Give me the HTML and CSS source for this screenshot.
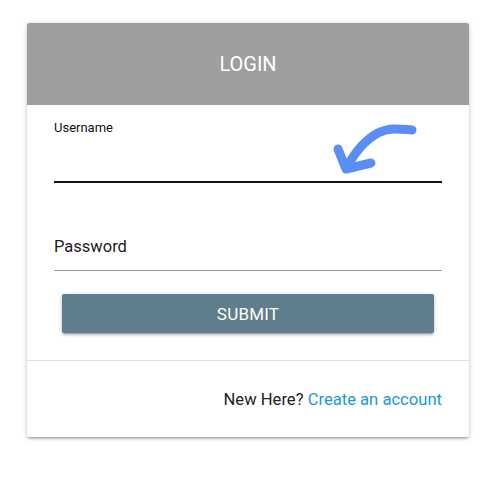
FILE: index.html
```html
<!DOCTYPE html>
<html>
<head>
<meta charset="utf-8">
<link rel="stylesheet" href="styles.css">
</head>
<body>
<div class="card">
  <div class="card-header">LOGIN</div>
  <form class="card-body">
    <div class="field field-user">
      <label class="label-small" for="u">Username</label>
      <input id="u" class="input input-active" type="text">
    </div>
    <div class="field field-pass">
      <input id="p" class="input input-plain" type="password" placeholder="Password">
    </div>
    <button class="submit" type="button">SUBMIT</button>
  </form>
  <div class="card-footer">
    <span class="new">New Here?</span>&nbsp;<a class="link" href="#">Create an account</a>
  </div>
</div>
<svg class="scribble" width="500" height="482" viewBox="0 0 500 482">
  <path d="M412 130 C400 129 390 127 378 133 C365 140 355 152 347 167" />
  <path d="M338 149 L346 169 L371 163" />
</svg>
</body>
</html>
```
FILE: styles.css
```css
html, body {
  margin: 0;
  padding: 0;
  background: #fff;
  font-family: Roboto, "Liberation Sans", sans-serif;
}
body {
  position: relative;
  width: 500px;
  height: 482px;
  padding-top: 23px;
  box-sizing: border-box;
}
.card {
  margin-left: 27px;
  width: 442px;
  background: #fff;
  border-radius: 2px;
  box-shadow: 0 2px 2px 0 rgba(0,0,0,0.14), 0 3px 1px -2px rgba(0,0,0,0.12), 0 1px 5px 0 rgba(0,0,0,0.2);
}
.card-header {
  height: 82px;
  background: #9e9e9e;
  color: #fff;
  font-size: 20px;
  display: flex;
  align-items: center;
  justify-content: center;
  border-radius: 2px 2px 0 0;
}
.card-body {
  margin: 0;
  padding: 0 27px 27px;
  display: flex;
  flex-direction: column;
  border-bottom: 1px solid #e0e0e0;
}
.field {
  display: flex;
  flex-direction: column;
}
.label-small {
  margin-top: 16px;
  font-size: 13px;
  line-height: 14px;
  color: #111;
}
.input {
  font-family: inherit;
  border: none;
  outline: none;
  background: transparent;
  padding: 0;
  margin: 0;
  width: 100%;
  box-sizing: border-box;
}
.input-active {
  height: 48px;
  border-bottom: 2px solid #111;
}
.input-plain {
  margin-top: 40px;
  height: 48px;
  font-size: 16.5px;
  border-bottom: 1px solid #9e9e9e;
}
.input-plain::placeholder {
  color: #1a1a1a;
  opacity: 1;
}
.submit {
  margin: 23px 8px 0;
  height: 39px;
  border: none;
  border-radius: 2px;
  background: #607d8b;
  color: #fff;
  font-family: inherit;
  font-size: 17px;
  letter-spacing: 0.2px;
  box-shadow: 0 2px 2px 0 rgba(0,0,0,0.14), 0 3px 1px -2px rgba(0,0,0,0.12), 0 1px 5px 0 rgba(0,0,0,0.2);
}
.card-footer {
  height: 76px;
  padding: 0 27px;
  display: flex;
  align-items: center;
  justify-content: flex-end;
  font-size: 16.6px;
  color: #222;
}
.link {
  color: #1a98dc;
  text-decoration: none;
}
.scribble {
  position: absolute;
  left: 0;
  top: 0;
  pointer-events: none;
  fill: none;
  stroke: #5b8ef5;
  stroke-width: 9;
  stroke-linecap: round;
  stroke-linejoin: round;
}
```
